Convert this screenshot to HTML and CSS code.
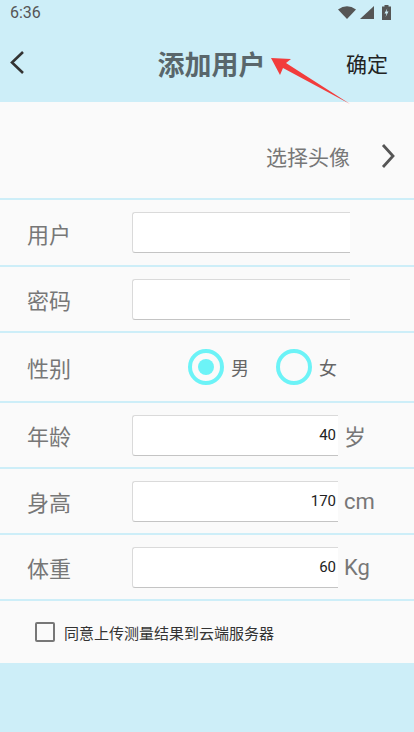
FILE: index.html
```html
<!DOCTYPE html>
<html lang="zh-CN">
<head>
    <meta charset="UTF-8">
    <meta name="viewport" content="width=device-width, initial-scale=1.0">
    <title>添加用户</title>
    <link rel="stylesheet" href="styles.css">
</head>
<body>
    <div class="status-bar">
        <span class="time">6:36</span>
        <div class="status-icons">
            <svg width="18" height="13" viewBox="0 0 18 13"><path d="M0 3.5 Q9 -3 18 3.5 L9 13 Z" fill="#555"/></svg>
            <svg width="14" height="13" viewBox="0 0 14 13"><path d="M14 0 L14 13 L0 13 Z" fill="#555"/></svg>
            <svg width="9" height="15" viewBox="0 0 9 15"><path d="M2.5 0 H6.5 V1.5 H9 V15 H0 V1.5 H2.5 Z" fill="#555"/><path d="M5.2 3.5 L2.5 8.6 H4.4 L3.6 12 L6.5 6.6 H4.6 Z" fill="#cdeef8"/></svg>
        </div>
    </div>

    <div class="toolbar">
        <svg class="back" width="20" height="26" viewBox="0 0 20 26"><path d="M15 2 L4 12.5 L15 23" fill="none" stroke="#333" stroke-width="2.6"/></svg>
        <h1 class="title">添加用户</h1>
        <span class="confirm">确定</span>
    </div>

    <div class="panel">
        <div class="avatar-row">
            <span class="avatar-text">选择头像</span>
            <svg class="chevron" width="16" height="26" viewBox="0 0 16 26"><path d="M3 2 L13 13 L3 24" fill="none" stroke="#555" stroke-width="2.8"/></svg>
        </div>

        <div class="row row-first">
            <label class="row-label">用户</label>
            <input class="field" type="text">
        </div>
        <div class="row">
            <label class="row-label">密码</label>
            <input class="field" type="password">
        </div>
        <div class="row row-gender">
            <label class="row-label">性别</label>
            <div class="radios">
                <span class="radio checked"></span><span class="radio-text">男</span>
                <span class="radio"></span><span class="radio-text">女</span>
            </div>
        </div>
        <div class="row">
            <label class="row-label">年龄</label>
            <input class="field field-num" type="text" value="40">
            <span class="unit">岁</span>
        </div>
        <div class="row">
            <label class="row-label">身高</label>
            <input class="field field-num" type="text" value="170">
            <span class="unit">cm</span>
        </div>
        <div class="row">
            <label class="row-label">体重</label>
            <input class="field field-num" type="text" value="60">
            <span class="unit">Kg</span>
        </div>

        <div class="agree-row">
            <span class="checkbox"></span>
            <span class="agree-text">同意上传测量结果到云端服务器</span>
        </div>
    </div>

    <svg class="pointer" width="414" height="110" viewBox="0 0 414 110">
        <path d="M271 58 L291 59 L286 63 L350 104 L283 68 L280 75 Z" fill="#f23c3c"/>
    </svg>
</body>
</html>
```

FILE: styles.css
```css
body {
    margin: 0;
    width: 414px;
    height: 732px;
    background-color: #cdeef8;
    font-family: Roboto, "Noto Sans CJK SC", sans-serif;
    position: relative;
    overflow: hidden;
}
.status-bar {
    height: 24px;
    display: flex;
    align-items: center;
    justify-content: space-between;
    padding: 0 23px 0 10px;
}
.time {
    font-size: 16px;
    color: #555;
}
.status-icons {
    display: flex;
    align-items: center;
    gap: 4px;
}
.status-icons svg:last-child {
    margin-left: 4px;
}
.toolbar {
    height: 78px;
    display: grid;
    grid-template-columns: 1fr auto 1fr;
    align-items: center;
    padding: 0 26px 0 8px;
}
.title {
    margin: 0 0 0 27px;
    font-size: 27px;
    font-weight: bold;
    color: #59666b;
    font-family: "Noto Sans CJK SC", sans-serif;
}
.confirm {
    justify-self: end;
    font-size: 21px;
    color: #222;
    font-family: "Noto Sans CJK SC", sans-serif;
}
.panel {
    background: #fafafa;
    height: 561px;
}
.avatar-row {
    height: 98px;
    display: flex;
    align-items: center;
    justify-content: flex-end;
    padding: 12px 18px 0 0;
    box-sizing: border-box;
    border-bottom: 2px solid #cdeef8;
}
.avatar-text {
    font-size: 21px;
    color: #777;
    margin-right: 30px;
    font-family: "Noto Sans CJK SC", sans-serif;
}
.row {
    height: 66px;
    box-sizing: border-box;
    display: flex;
    align-items: center;
    border-bottom: 2px solid #cdeef8;
}
.row-first {
    height: 67px;
}
.row-gender {
    height: 70px;
}
.row-label {
    width: 105px;
    padding-left: 27px;
    font-size: 22px;
    color: #777;
    font-family: "Noto Sans CJK SC", sans-serif;
}
.field {
    width: 218px;
    height: 41px;
    box-sizing: border-box;
    background: #fff;
    border: 1px solid #dadada;
    border-bottom-color: #c4c4c4;
    border-right: none;
    border-radius: 3px 0 0 3px;
    padding: 0 2px;
    font-family: Roboto, sans-serif;
    font-size: 15px;
    color: #222;
    outline: none;
}
.field-num {
    width: 206px;
    text-align: right;
}
.unit {
    margin-left: 6px;
    font-size: 22px;
    color: #777;
    font-family: Roboto, "Noto Sans CJK SC", sans-serif;
}
.radios {
    display: flex;
    align-items: center;
    margin-left: 56px;
}
.radio {
    width: 36px;
    height: 36px;
    box-sizing: border-box;
    border: 4px solid #6cf3f7;
    border-radius: 50%;
    position: relative;
}
.radio.checked::after {
    content: "";
    position: absolute;
    left: 6px;
    top: 6px;
    width: 16px;
    height: 16px;
    border-radius: 50%;
    background: #6cf3f7;
}
.radio-text {
    font-size: 18px;
    color: #666;
    margin: 0 27px 0 7px;
    font-family: "Noto Sans CJK SC", sans-serif;
}
.agree-row {
    height: 62px;
    display: flex;
    align-items: center;
    padding-left: 35px;
}
.checkbox {
    width: 20px;
    height: 20px;
    box-sizing: border-box;
    border: 2px solid #777;
    border-radius: 2px;
    margin-right: 9px;
}
.agree-text {
    font-size: 15px;
    color: #333;
    font-family: "Noto Sans CJK SC", sans-serif;
}
.pointer {
    position: absolute;
    left: 0;
    top: 0;
    pointer-events: none;
}
```
